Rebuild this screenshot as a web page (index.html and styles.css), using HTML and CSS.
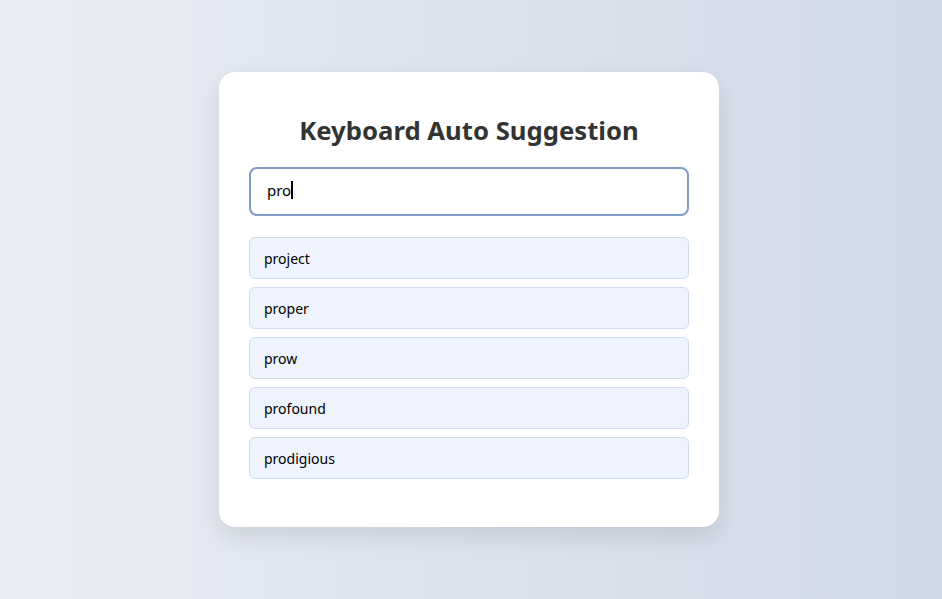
FILE: index.html
```html
<!DOCTYPE html>
<html lang="en">
<head>
<meta charset="utf-8">
<title>Keyboard Auto Suggestion</title>
<link rel="stylesheet" href="styles.css">
</head>
<body>
<main class="card">
  <h1 class="title">Keyboard Auto Suggestion</h1>
  <div class="search" role="textbox" aria-label="Type a word">pro<span class="caret"></span></div>
  <ul class="suggestions">
    <li class="item">project</li>
    <li class="item">proper</li>
    <li class="item">prow</li>
    <li class="item">profound</li>
    <li class="item">prodigious</li>
  </ul>
</main>
</body>
</html>
```
FILE: styles.css
```css
* { box-sizing: border-box; }
html, body { height: 100%; }
body {
  margin: 0;
  padding-right: 4px;
  font-family: "Noto Sans", "Open Sans", sans-serif;
  background: linear-gradient(90deg, #e9edf5 0%, #d0d9e7 100%);
  display: flex;
  align-items: center;
  justify-content: center;
}
.card {
  width: 500px;
  background: #fff;
  border-radius: 16px;
  box-shadow: 0 10px 25px rgba(0, 0, 0, 0.1);
  padding: 41px 30px 48px;
}
.title {
  margin: 0 0 18px;
  text-align: center;
  font-size: 25.7px;
  font-weight: 700;
  color: #333;
  line-height: 36px;
}
.search {
  height: 49px;
  border: 2px solid #7f9dc9;
  border-radius: 8px;
  padding: 0 16px 3px;
  display: flex;
  align-items: center;
  font-size: 15px;
  color: #000;
}
.caret {
  display: inline-block;
  width: 2px;
  height: 18px;
  background: #000;
}
.suggestions {
  list-style: none;
  margin: 21px 0 0;
  padding: 0;
  display: flex;
  flex-direction: column;
  gap: 8px;
}
.item {
  height: 42px;
  display: flex;
  align-items: center;
  padding: 0 14px;
  background: #eef3fd;
  border: 1px solid #cfdcef;
  border-radius: 6px;
  font-size: 14px;
  color: #000;
}
```
